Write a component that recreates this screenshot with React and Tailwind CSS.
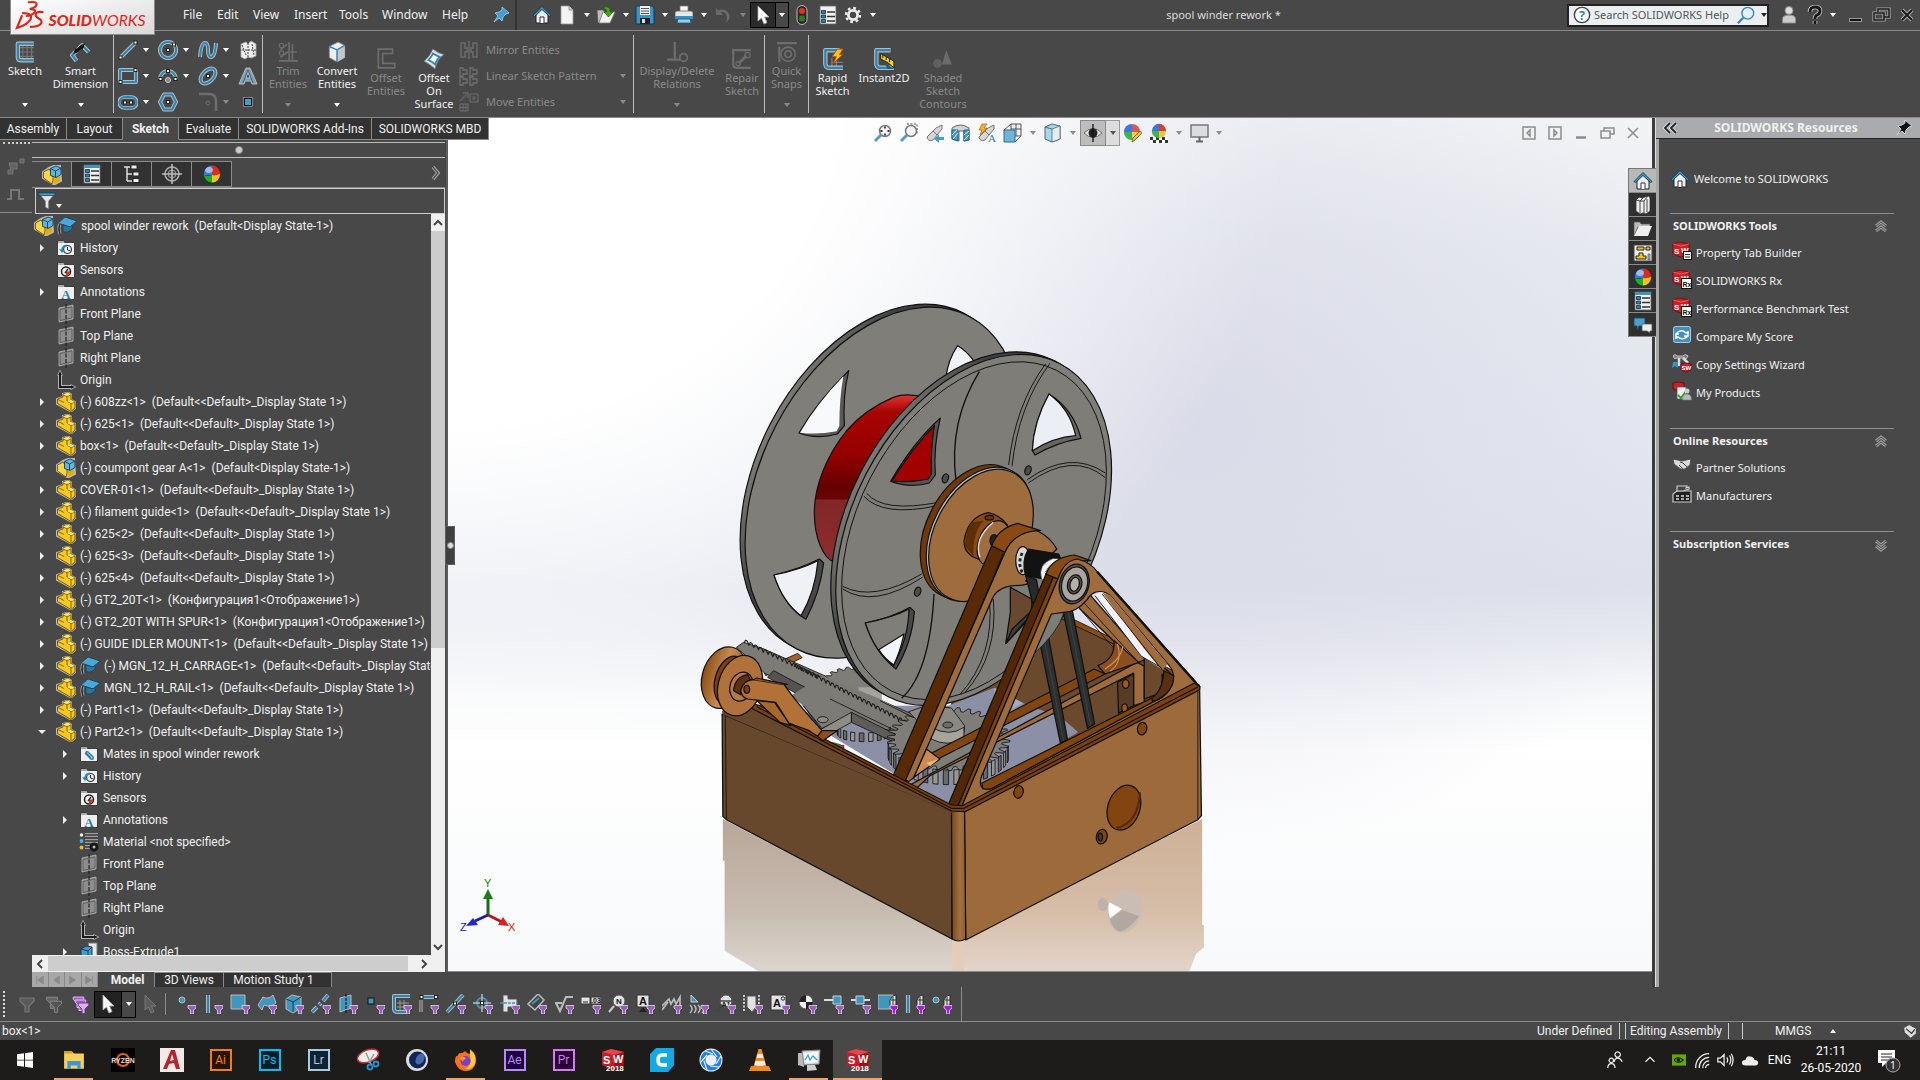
import React from "react";

/* ---------- icon primitives ---------- */
function Ico({ children, s = 20, box = 20, className = "" }) {
  return (
    <svg width={s} height={s} viewBox={`0 0 ${box} ${box}`} fill="none" aria-hidden="true" className={"shrink-0 " + className}>
      {children}
    </svg>
  );
}
const HALO = "#b9b9b9";
function Halo({ d, c = "#2b86b5", w = 2, h = 4, fill = "none" }) {
  return (
    <g fill={fill} strokeLinejoin="round">
      <path d={d} stroke={HALO} strokeWidth={h} />
      <path d={d} stroke={c} strokeWidth={w} />
    </g>
  );
}
function Node({ x, y, c = "#fff" }) {
  return <rect x={x - 1.5} y={y - 1.5} width="3" height="3" fill={c} stroke="#222" strokeWidth="1" />;
}
function Caret({ className = "text-white" }) {
  return (
    <svg width="6" height="4" viewBox="0 0 6 4" className={"shrink-0 " + className} aria-hidden="true">
      <path d="M0 0h6L3 4z" fill="currentColor" />
    </svg>
  );
}

const Home = () => (
  <Ico>
    <path d="M4 9v9h12V9l-6-5z" fill="#eee" stroke="#222" strokeWidth="1" />
    <path d="M1 10.500 10 1.500l9 9-1.500 1L10 4.500 2.500 11.500z" fill="#3e9ccc" stroke="#12384c" strokeWidth=".9" />
    <path d="M8 18v-6h4v6" stroke="#333" fill="#fff" />
  </Ico>
);
const Doc = () => (
  <Ico>
    <path d="M4 1h8l4 4v14H4z" fill="#f4f4f4" stroke="#999" strokeWidth=".8" />
    <path d="M12 1v4h4" fill="#ccc" stroke="#888" strokeWidth=".8" />
  </Ico>
);
const OpenDoc = () => (
  <Ico>
    <path d="M1 5h6l2 2v11H2z" fill="#bdbdbd" stroke="#555" strokeWidth=".7" />
    <path d="M3 18 7 7h12l-5 11z" fill="#f1f1f1" stroke="#777" strokeWidth=".8" />
    <path d="M8 2q7-1 6 5h3l-4.500 5L8 7h3q0-3-3-3z" fill="#45a717" stroke="#1f5c05" strokeWidth=".7" />
  </Ico>
);
const Save = () => (
  <Ico>
    <path d="M1 1h17l1 2v16H1z" fill="#3d94c0" stroke="#0f3a52" />
    <path d="M5 1h10v9H5z" fill="#f0f0f0" />
    <path d="M6 3.500h8M6 6h8M6 8.500h8" stroke="#555" />
    <path d="M5 13h10v6H5z" fill="#222" />
    <path d="M7 14h3v4H7z" fill="#ddd" />
  </Ico>
);
const Print = () => (
  <Ico>
    <path d="M6 1h8v6H6z" fill="#f5f5f5" stroke="#777" strokeWidth=".7" />
    <path d="M1 8q0-2 2-2h14q2 0 2 2v6H1z" fill="#e8e8e8" stroke="#555" strokeWidth=".7" />
    <path d="M1 11h18v3H1z" fill="#3390c4" />
    <path d="M4 14h12l1 4H3z" fill="#8fd0ee" stroke="#1c5776" strokeWidth=".8" />
  </Ico>
);
const Undo = () => (
  <Ico>
    <path d="M3 3v7h7L7.500 7.500Q14 5 14 15l-2 3q6-3 4-9-3-6-11-4z" fill="#6a6a6a" />
  </Ico>
);
const Cursor = ({ c = "#fff", s = "#aaa" }) => (
  <Ico>
    <path d="M5 1v15l3.500-3 2.500 6 3-1.500-2.500-5.500H16z" fill={c} stroke={s} strokeWidth=".9" />
  </Ico>
);
const Traffic = () => (
  <Ico>
    <rect x="5" y="0.500" width="10" height="19" rx="5" fill="#2a2a2a" stroke="#bbb" />
    <circle cx="10" cy="6" r="3" fill="#e5301f" />
    <circle cx="10" cy="13.500" r="3" fill="#2c7d22" />
  </Ico>
);
const PropList = ({ top = false }) => (
  <Ico>
    <rect x="2" y="1" width="16" height="18" fill="#f2f2f2" stroke="#666" strokeWidth=".8" />
    {top && <path d="M2 1h16v3H2z" fill="#3d94c0" />}
    <g fill="#2b86b5" stroke="#123" strokeWidth=".8">
      <path d="M3.500 5.500h4v3h-4zM3.500 10h4v3h-4zM3.500 14.500h4v3h-4z" />
    </g>
    <path d="M9 7h8M9 11.500h8M9 16h8" stroke="#333" strokeWidth="1.300" />
  </Ico>
);
const Gear = () => (
  <Ico>
    <circle cx="10" cy="10" r="4.600" stroke="#eee" strokeWidth="2.800" />
    <circle cx="10" cy="10" r="7" stroke="#eee" strokeWidth="2.400" strokeDasharray="2.700 2.798" />
  </Ico>
);
const Pin = ({ c = "#3f9fd6", s = "#9cc7df" }) => (
  <Ico>
    <path d="M11 2l7 6-3 1-3 3-1 4-3-3-5 4 4-6-3-3 4-1 3-2z" fill={c} stroke={s} strokeWidth=".9" />
  </Ico>
);

/* ---------- ribbon icons ---------- */
const D = "#6d6d6d";
const SketchI = () => (
  <Ico s={22}>
    <path d="M8 2v16M12 2v16M16 2v16M4 6h14M4 10h14M4 14h14" stroke="#777" />
    <Halo d="M18 2.500H3.500v12q0 3 3 3H18" />
  </Ico>
);
const SmartDim = () => (
  <Ico s={22}>
    <Halo d="M6 18 2 13l9-9 6 6" />
    <path d="m3 12 2-6 3 3zM14 2l-6 3 3 3z" fill="#111" />
    <path d="m5 10 7-6" stroke="#111" strokeWidth="3" />
  </Ico>
);
const Line = () => (
  <Ico>
    <Halo d="M2 18 17 3" />
    <Node x={2.500} y={17.500} />
    <Node x={17.500} y={2.500} />
  </Ico>
);
const Circle = () => (
  <Ico>
    <Halo d="M10 2a8 8 0 1 0 .1 0" />
    <Node x={10} y={10} />
    <Node x={16} y={4.500} />
  </Ico>
);
const Spline = () => (
  <Ico>
    <Halo d="M2 17Q3 3 7 3q3 0 3 7t3 7q4 0 5-14" />
  </Ico>
);
const PlaneI = () => (
  <Ico>
    <path d="M3 4 8 2l2 2 3-3 5 3v12l-5 2-3-1-3 2-4-2z" fill="#eee" stroke="#aaa" strokeWidth=".8" />
    <path d="M10 0v20M1 10h18M4 5l4 10M14 4l2 11" stroke="#444" strokeDasharray="2 1" />
  </Ico>
);
const RectI = () => (
  <Ico>
    <Halo d="M2 4h16v12H2z" />
    <Node x={2.500} y={16} />
    <Node x={17.500} y={4} />
  </Ico>
);
const ArcI = () => (
  <Ico>
    <Halo d="M2 13a8 8 0 0 1 16 0" />
    <Node x={2.500} y={13} />
    <Node x={17.500} y={13} />
    <Node x={10} y={5} />
    <circle cx="10" cy="14" r="2.500" fill="#888" stroke="#ccc" />
  </Ico>
);
const EllI = () => (
  <Ico>
    <g transform="rotate(-45 10 10)">
      <ellipse cx="10" cy="10" rx="9" ry="5.500" stroke={HALO} strokeWidth="4" />
      <ellipse cx="10" cy="10" rx="9" ry="5.500" stroke="#2b86b5" strokeWidth="2" />
    </g>
    <Node x={10} y={10} />
  </Ico>
);
const TextA = () => (
  <Ico>
    <path d="M1 18 8 2h4l7 16h-5l-1-3H7l-1 3zM8 12h4l-2-6z" fill="#7d9eb0" stroke="#bbb" fillRule="evenodd" />
    <path d="M5 17 10 4l5 13" stroke="#2b6f94" />
  </Ico>
);
const SlotI = () => (
  <Ico>
    <rect x="1" y="5" width="18" height="11" rx="5.500" stroke={HALO} strokeWidth="3.500" />
    <rect x="1.500" y="5" width="17" height="11" rx="5.500" stroke="#2b86b5" strokeWidth="2" />
    <Node x={7} y={10.500} />
    <Node x={13} y={10.500} />
  </Ico>
);
const PolyI = () => (
  <Ico>
    <Halo d="M6 2.500h8l4 7.500-4 7.500H6L2 10z" />
    <Node x={10} y={10} />
  </Ico>
);
const FilletI = () => (
  <Ico>
    <path d="M1 2h10q7 0 7 7v10" stroke={D} strokeWidth="2.500" />
    <circle cx="10" cy="11" r="2" stroke={D} />
  </Ico>
);
const PointI = () => (
  <Ico>
    <rect x="6.500" y="6.500" width="7" height="7" fill="#3f9fc8" stroke="#111" />
    <rect x="5.500" y="5.500" width="9" height="9" stroke="#aaa" strokeWidth=".6" />
  </Ico>
);
const TrimI = () => (
  <Ico s={22}>
    <path d="M11 1v17M14 3v14M2 18h17M12 10h6M3 8l6-5M3 15l8-6" stroke={D} strokeWidth="1.500" />
    <circle cx="4" cy="4" r="2" stroke={D} />
    <circle cx="4" cy="11" r="2" stroke={D} />
  </Ico>
);
const ConvertI = () => (
  <Ico s={22}>
    <path d="M3 5 11 1l6 3v11l-7 4-7-4z" fill="#eee" stroke="#888" strokeWidth=".8" />
    <path d="M10 8 17 4v11l-7 4z" fill="#c6c6c6" />
    <path d="M3 5l7 3 7-4M10 8v11" stroke="#2b86b5" strokeWidth="1.300" />
  </Ico>
);
const OffsetI = () => (
  <Ico s={22}>
    <path d="M16 1H3v17h15v-4H7V5h9z" stroke={D} strokeWidth="1.500" />
  </Ico>
);
const OffSurfI = () => (
  <Ico s={22}>
    <path d="M9 1q5 4 10 5-6 4-8 13Q5 14 1 12q5-4 8-11z" fill="#ddd" stroke="#777" strokeWidth=".7" />
    <path d="M9 5q3 2 6 3-3 3-4 7-3-3-6-4 3-3 4-6z" fill="#fff" stroke="#2b86b5" strokeWidth="1.600" />
  </Ico>
);
const MirrorI = () => (
  <Ico>
    <path d="M10 1v18M2 3v14h4V12H8V8H6V3zM18 3v14h-4V12h-2V8h2V3z" stroke={D} strokeWidth="1.400" />
  </Ico>
);
const LinearI = () => (
  <Ico>
    <path d="M1 2h3v2h4v4H4v2H1zM11 2h3v2h4v4h-4v2h-3zM1 11h3v2h4v4H4v2H1zM11 11h3v2h4v4h-4v2h-3z" stroke={D} strokeWidth="1.300" />
  </Ico>
);
const MoveI = () => (
  <Ico>
    <path d="M1 9 9 1M4 1h5v5" stroke="#5d5d5d" strokeWidth="2" />
    <path d="M11 2h8v8h-8zM14 5h2v2h-2zM1 12h8v7H1zM1 15.500h8M4 12v7M7 12v7" stroke={D} />
  </Ico>
);
const RelI = () => (
  <Ico s={22}>
    <path d="M8 1v15M1 17h12" stroke={D} strokeWidth="2" />
    <circle cx="16" cy="15" r="3.500" stroke={D} strokeWidth="1.500" />
  </Ico>
);
const RepairI = () => (
  <Ico s={22}>
    <path d="M18 2H2v13q0 3 3 3h13" stroke={D} strokeWidth="2" />
    <path d="M7 14l7-7" stroke={D} strokeWidth="2.500" />
    <circle cx="6.500" cy="14" r="2" stroke={D} />
    <circle cx="15" cy="6.500" r="2.500" stroke={D} />
  </Ico>
);
const SnapI = () => (
  <Ico s={22}>
    <path d="M1 2h18M3 5v14" stroke={D} strokeWidth="2" />
    <circle cx="11" cy="12" r="6.500" stroke={D} strokeWidth="1.500" />
    <circle cx="11" cy="12" r="3" stroke={D} strokeWidth="1.500" />
  </Ico>
);
const RapidI = () => (
  <Ico s={22}>
    <path d="M9 9v8M13 9v8M9 13h10" stroke="#888" />
    <Halo d="M16 2H3v12q0 4 4 4h12" />
    <path d="M14 1h5l-3 5h3l-9 8 3-6H9z" fill="#f5c518" stroke="#b5480e" strokeWidth=".9" />
  </Ico>
);
const InstantI = () => (
  <Ico s={22}>
    <Halo d="M16 2H3v12q0 4 4 4h12" />
    <path d="M7 5l12 7v6l-6-5-6-3z" fill="#f5d518" stroke="#222" strokeWidth=".9" />
    <path d="M9 6v3M12 8v3M15 10v3" stroke="#222" />
    <path d="m10 12 8 7h-5z" fill="#195d80" />
  </Ico>
);
const ShadedI = () => (
  <Ico s={22}>
    <circle cx="5" cy="14" r="4" fill="#606060" />
    <path d="m13 2 5 13H9z" fill="#6b6b6b" />
  </Ico>
);

/* ---------- tree icons ---------- */
const Part = () => (
  <Ico>
    <path d="M1 7 7 5V2l5-1.500 3 2V8l4 2v6l-4 3.500L1 12z" fill="#f2c21a" stroke={HALO} strokeWidth="2" />
    <path d="M1.500 7 7 5V2l5-1.500 3 2V8l4 2v6l-4 3.500-13.500-8z" fill="#f6c820" stroke="#5b4305" strokeWidth=".8" />
    <path d="M7 3l4 1.500 4-1.500M11 4.500V9l4 2.500 4-1.500M15 11.500v7M2 7.500l6 3" stroke="#7a5a08" strokeWidth=".9" />
    <path d="m7 2.500 4 1.500 4-1.500-3-2zM11 9l4 2 4-1-4-2z" fill="#ffe779" />
  </Ico>
);
const Asm = () => (
  <Ico>
    <path d="M1 7 7 3l5-2h6l1 15-7 3.500L1 13z" fill="#f2c21a" stroke={HALO} strokeWidth="2" />
    <path d="M1.500 7 7 4l4 6v5l-1 4-8.500-6z" fill="#f8d545" stroke="#5b4305" strokeWidth=".8" />
    <path d="M12 13l6-2v5l-6 3z" fill="#e0ac12" />
    <path d="M8.500 3.500 14 1l5 2v6.500l-5 3-5.500-2z" fill="#63b4dc" stroke="#123f57" strokeWidth=".9" />
    <path d="M8.500 3.500 13.500 6 19 3M13.500 6v6" stroke="#123f57" strokeWidth=".9" />
  </Ico>
);
const Hat = () => (
  <Ico>
    <path d="M1 7 8 1l12 4-7 6z" fill="#4aa8d8" stroke="#173f55" strokeWidth=".8" />
    <path d="M6 9v6q4 3 9-2V9l-2 2z" fill="#2a769f" stroke="#173f55" strokeWidth=".7" />
    <path d="M3 8q-2 4 0 10" stroke="#bbb" strokeWidth="3" />
    <path d="M3 8q-2 4 0 10" stroke="#222" strokeWidth="1.500" />
  </Ico>
);
const Folder = ({ children }) => (
  <Ico>
    <path d="M1.500 2.500h6l1 2h10v13h-17z" fill="#efefef" stroke="#333" strokeWidth=".9" />
    <path d="M2 3h5l1 2H2z" fill="#aaa" />
    {children}
  </Ico>
);
const History = () => (
  <Folder>
    <circle cx="11.500" cy="11.500" r="4" stroke="#333" strokeWidth="1.200" />
    <path d="M11.500 9v3l3 1" stroke="#333" />
    <path d="M11 7.500q-5 0-5 6" stroke="#2b86b5" strokeWidth="1.800" />
    <path d="m3 11 3 4 3-3z" fill="#2b86b5" />
  </Folder>
);
const Sensors = () => (
  <Folder>
    <circle cx="10" cy="11.500" r="4.500" stroke="#222" strokeWidth="1.500" />
    <path d="M10 12v4q4-1 4-5z" fill="#d8341c" />
    <path d="m9 13 3-4" stroke="#222" strokeWidth="1.300" />
  </Folder>
);
const Annot = () => (
  <Folder>
    <text x="10" y="16.500" textAnchor="middle" fontSize="13" fontWeight="700" fill="#2b7eaa" fontFamily="Liberation Serif, serif">A</text>
  </Folder>
);
const Mates = () => (
  <Folder>
    <path d="m6 9 6 6q3 1 2-2L9 8Q7 7 7 9l5 5" stroke="#2b7eaa" strokeWidth="1.500" />
  </Folder>
);
const Plane = () => (
  <Ico>
    <path d="M3 4 17 1v14L3 18z" fill="#8d8d8d" stroke="#b5b5b5" strokeWidth=".8" />
    <path d="M4 5.500 16 3v11L4 16.500z" stroke="#555" strokeWidth=".8" />
    <path d="M10 0v20" stroke="#222" strokeWidth="1.200" strokeDasharray="4 1.500" />
  </Ico>
);
const Origin = () => (
  <Ico>
    <path d="M4 3v14h13" stroke="#b5b5b5" strokeWidth="4" />
    <path d="m4-.5-3 6h6zM20.500 17l-6-3v6z" fill="#b5b5b5" />
    <path d="M4 3v14h13" stroke="#1c1c1c" strokeWidth="2" />
    <path d="m4 1-1.800 4h3.600zM19 17l-4-1.800v3.600z" fill="#1c1c1c" />
  </Ico>
);
const Material = () => (
  <Ico>
    <path d="M6 3h13M6 9h13M6 15h6" stroke="#bbb" strokeWidth="3.500" />
    <path d="M6 3h13M6 9h13M6 15h6" stroke="#333" strokeWidth="1.700" />
    <circle cx="2.500" cy="3" r="1.700" fill="#eee" />
    <circle cx="2.500" cy="9" r="1.900" fill="#49b5ee" />
    <circle cx="2.500" cy="15.500" r="1.900" fill="#f0c115" />
    <circle cx="15" cy="15" r="3" stroke="#181818" strokeWidth="3" fill="#bbb" />
  </Ico>
);
const Boss = () => (
  <Ico>
    <path d="M9 1h9v14l-5 3z" fill="#e8e8e8" stroke="#777" />
    <path d="M2 7 7 4l6 1v12l-4 2-7-3z" fill="#3f9fc8" stroke="#123f57" />
    <path d="m2 7 7 2 4-4M9 9v10" stroke="#123f57" />
  </Ico>
);
const Ball = () => (
  <Ico>
    <clipPath id="ball"><ellipse cx="10" cy="10" rx="8.500" ry="9" /></clipPath>
    <g clipPath="url(#ball)">
      <path d="M0 0h10v11H0z" fill="#3a78e0" />
      <path d="M10 0h10v11H10z" fill="#e02a1c" />
      <path d="M0 10q6 3 10 1v9H0z" fill="#1fae2c" />
      <path d="M10 11q5 1 10-2v11H10z" fill="#f3c51b" />
      <ellipse cx="7" cy="6" rx="4" ry="3" fill="#fff" opacity=".5" />
    </g>
    <ellipse cx="10" cy="10" rx="8.500" ry="9" stroke="#222" strokeWidth=".6" />
  </Ico>
);
const ConfigI = () => (
  <Ico>
    <path d="M2 3h6M5 3v14M5 10h5M5 17h5" stroke="#ddd" strokeWidth="1.500" />
    <path d="M9 1h6v4H9zM11 8h6v4h-6zM11 14.500h6v4h-6z" fill="#eee" stroke="#222" />
  </Ico>
);
const Target = () => (
  <Ico>
    <circle cx="10" cy="10" r="7" stroke="#aaa" strokeWidth="1.600" />
    <circle cx="10" cy="10" r="4" fill="#444" stroke="#999" />
    <path d="M10 0v20M0 10h20" stroke="#bbb" strokeWidth="1.600" />
  </Ico>
);

/* ---------- view toolbar icons ---------- */
const Glass = ({ dash }) => (
  <Ico>
    {dash && <path d="M8 1h10v11" stroke="#444" strokeDasharray="2 1.500" />}
    <circle cx="12" cy="8" r="5.500" fill="#f4f6f7" stroke="#777" strokeWidth="1.500" />
    <path d="m8 12-6 6" stroke="#5e9cbd" strokeWidth="3" />
    {!dash && <path d="M12 3.500v2M12 10.500v2M7.500 8h2M14.500 8h2" stroke="#333" strokeWidth="1.800" />}
  </Ico>
);
const Spy = ({ a }) => (
  <Ico>
    <path d="m2 14 9-9 6-3v4l-9 11q-5 2-6-3z" fill="#d6d6d6" stroke="#777" />
    <path d="m8 8 4 4" stroke="#777" />
    {a ? (
      <>
        <path d="M5 1h5L7 5h3l-7 7 2-5H2z" fill="#f5b52a" stroke="#b25a18" strokeWidth=".7" />
        <text x="11" y="19" fontSize="11" fill="#2b7eaa" fontFamily="Liberation Serif, serif">A</text>
      </>
    ) : (
      <path d="M19 14h-5v-3l-5 5 5 4v-3h5z" fill="#4b9cc4" />
    )}
  </Ico>
);
const Section = () => (
  <Ico>
    <path d="M1 5q8-6 17 0v12l-5 1V8H8v10l-7-2z" fill="#cfd6da" stroke="#666" />
    <path d="M1 7h6v11l-6-2zM13 7h5v10l-5 1z" fill="#4b9cc4" stroke="#256384" />
    <path d="m1 12 5-5M2 16l5-6M13 12l5-4M13 17l5-5" stroke="#cce8f5" />
  </Ico>
);
const ViewOr = () => (
  <Ico>
    <path d="M8 1h10v12H8zM13 1v12M8 6h10" stroke="#555" fill="#eee" />
    <path d="M1 7h11v12H1z" fill="#6fb5d6" stroke="#2d6f92" />
    <path d="m1 7 7-6M12 19l6-6" stroke="#555" />
  </Ico>
);
const Cube = () => (
  <Ico>
    <path d="M2 4 9 1l8 2v13l-8 3-7-3z" fill="#a8d6ea" stroke="#4a6d7d" />
    <path d="m9 6 8-3v13l-8 3z" fill="#e4eef2" stroke="#4a6d7d" strokeWidth=".8" />
    <path d="m2 4 7 2" stroke="#4a6d7d" />
  </Ico>
);
const Eye = () => (
  <Ico>
    <path d="M1 10q9-9 18 0-9 9-18 0z" fill="#e6e6e6" stroke="#666" />
    <circle cx="10" cy="10" r="4.500" fill="#222" />
    <path d="M10 1v18" stroke="#111" strokeWidth="1.300" />
  </Ico>
);
const BallPen = () => (
  <Ico>
    <g transform="scale(.9)"><path d="M10 1a9 9 0 0 0-9 9h9z" fill="#3a78e0" /><path d="M10 1a9 9 0 0 1 9 9h-9z" fill="#e0564c" /><path d="M1 10a9 9 0 0 0 9 9v-9z" fill="#3fb44a" /><path d="M19 10a9 9 0 0 1-9 9v-9z" fill="#e8d05b" /></g>
    <path d="m9 19 1-4 7-7 2 2-7 7z" fill="#e8c24a" stroke="#6a5520" strokeWidth=".8" />
  </Ico>
);
const Scene = () => (
  <Ico>
    <path d="M1 14h18v6H1z" fill="#fff" />
    <path d="M1 14h3v3H1zM7 14h3v3H7zM13 14h3v3h-3zM4 17h3v3H4zM10 17h3v3h-3zM16 17h3v3h-3z" fill="#333" />
    <g transform="translate(2 0) scale(.8)"><path d="M10 1a9 9 0 0 0-9 9h9z" fill="#3a78e0" /><path d="M10 1a9 9 0 0 1 9 9h-9z" fill="#e03a2c" /><path d="M1 10a9 9 0 0 0 9 9v-9z" fill="#3fb44a" /><path d="M19 10a9 9 0 0 1-9 9v-9z" fill="#e8c64b" /></g>
  </Ico>
);
const Monitor = () => (
  <Ico>
    <path d="M1 2h17v12H1z" fill="#d9dde0" stroke="#777" strokeWidth="1.500" />
    <path d="M9.500 14v4M6 18.500h7" stroke="#666" strokeWidth="2" />
  </Ico>
);

/* ---------- model drawing ---------- */
function gearPath(cx, cy, rx, ry, n, depth) {
  const p = [];
  for (let i = 0; i < n; i++) {
    [[0, 1 - depth], [0.25, 1], [0.5, 1], [0.75, 1 - depth]].forEach(([o, r]) => {
      const a = ((i + o) / n) * Math.PI * 2;
      p.push(`${(cx + Math.cos(a) * rx * r).toFixed(1)},${(cy + Math.sin(a) * ry * r).toFixed(1)}`);
    });
  }
  return p.join(" ");
}
function rackPath(x1, y1, x2, y2, n, h) {
  let d = `M${x1} ${y1}`;
  for (let i = 0; i < n; i++) {
    const f = (k) => [x1 + ((x2 - x1) * (i + k)) / n, y1 + ((y2 - y1) * (i + k)) / n];
    const [ax, ay] = f(0.25), [bx, by] = f(0.6), [ex, ey] = f(1);
    d += `L${ax.toFixed(1)} ${(ay - h).toFixed(1)}L${bx.toFixed(1)} ${(by - h).toFixed(1)}L${ex.toFixed(1)} ${ey.toFixed(1)}`;
  }
  return d;
}
function teeth(cx, cy, rx, ry, n, h, from, to) {
  const out = [];
  for (let i = 0; i < n; i++) {
    const a = ((from + ((to - from) * i) / n) * Math.PI) / 180;
    const b = ((from + ((to - from) * (i + 0.5)) / n) * Math.PI) / 180;
    const x1 = cx + Math.cos(a) * rx, y1 = cy + Math.sin(a) * ry, x2 = cx + Math.cos(b) * rx, y2 = cy + Math.sin(b) * ry;
    out.push(<path key={i} d={`M${x1} ${y1}L${x2} ${y2}V${y2 + h}L${x1} ${y1 + h}Z`} fill={i % 2 ? "#9a978d" : "#6c6a65"} />);
  }
  return out;
}
const FLANGE = { rx: 562, ry: 364 };

function Model() {
  return (
    <svg viewBox="448 118 1204 855" preserveAspectRatio="xMidYMid slice" className="block h-full w-full" role="img" aria-label="Spool winder assembly">
      <defs>
        <linearGradient id="red" x1="0" y1="0" x2="0" y2="1">
          <stop offset="0" stopColor="#e23434" /><stop offset=".1" stopColor="#a80404" /><stop offset=".35" stopColor="#960000" /><stop offset=".55" stopColor="#640000" /><stop offset=".62" stopColor="#6b0505" /><stop offset=".63" stopColor="#832628" /><stop offset="1" stopColor="#8c2e30" />
        </linearGradient>
        <linearGradient id="rim" x1="0" y1="0" x2="0" y2="1">
          <stop offset="0" stopColor="#7c7b78" /><stop offset=".25" stopColor="#3e3f40" /><stop offset=".6" stopColor="#37383a" /><stop offset=".8" stopColor="#6d6d6c" /><stop offset="1" stopColor="#6a6a68" />
        </linearGradient>
        <linearGradient id="post" x1="0" y1="0" x2="1" y2="0">
          <stop offset="0" stopColor="#74471f" /><stop offset=".6" stopColor="#a3703f" /><stop offset="1" stopColor="#8f5e31" />
        </linearGradient>
        <linearGradient id="refl" x1="0" y1="0" x2="0" y2="1">
          <stop offset="0" stopColor="#b9a798" /><stop offset=".6" stopColor="#c7bbb0" /><stop offset="1" stopColor="#ddd6d0" />
        </linearGradient>
        <linearGradient id="refr" x1="0" y1="0" x2="0" y2="1">
          <stop offset="0" stopColor="#cdb096" /><stop offset=".6" stopColor="#d6bda8" /><stop offset="1" stopColor="#e3d5ca" />
        </linearGradient>
        <linearGradient id="wheel" x1="0" y1="0" x2="1" y2="0">
          <stop offset="0" stopColor="#8f4e18" /><stop offset=".5" stopColor="#c98a52" /><stop offset="1" stopColor="#98561f" />
        </linearGradient>
      </defs>

      {/* floor reflection, box interior and gear train */}
      <g transform="translate(680 560) scale(.35714 .33333)" stroke="#111" strokeWidth="2.400" strokeLinejoin="round">
        <g stroke="none">
          <path d="M120 780 762 1140V1240H225L125 1175V905H120z" fill="url(#refl)" />
          <path d="M762 1140H797L1462 780V1098H1467V1165L1445 1185 1425 1240H762z" fill="url(#refr)" />
          <path d="M762 1140h33v100h-33z" fill="#e2cdbb" />
          <ellipse cx="1246" cy="1056" rx="46" ry="66" transform="rotate(12 1246 1056)" fill="#c9bdb4" />
          <path d="M1202 1030 1238 1050 1204 1078Q1196 1050 1202 1030z" fill="#fdfdfd" />
          <path d="M1204 1080 1238 1053 1286 1072Q1256 1112 1232 1118 1210 1110 1204 1080z" fill="#b3a89f" />
          <ellipse cx="1184" cy="1036" rx="14" ry="20" fill="#bcb3ac" />
        </g>
        <path d="M700 640 775 740 1440 390 1100 182 925 85 800 300z" fill="#6b492d" />
        <path d="M925 85 1100 180 1215 240 1455 378 1448 388 1205 250 1098 196 925 98z" fill="#8a4c18" />
        <path d="M330 470 460 420 600 440 750 440 880 386 960 432 1070 478 1115 520 840 690 750 732 600 645z" fill="#8c90a6" stroke="none" />
        <path d="M880 386 960 432 880 480z" fill="#a5a9bd" stroke="none" />

        {/* rack and sliding plate */}
        <path d="M232 330 330 283 342 296 240 350z" fill="#a06228" />
        <path d="M158 265 178 250 235 270 660 470 700 500 640 560 480 465 395 510 345 440 365 396 240 345z" fill="#7d7b76" />
        <path d="M245 355 262 335 368 395 340 412z" fill="#54534f" />
        <path d={rackPath(180, 252, 660, 500, 36, 10)} fill="none" stroke="#1a1a1a" strokeWidth="3" />
        <polygon points={gearPath(485, 372, 85, 48, 20, 0.14)} fill="#7f7d77" />
        <path d="M500 385h65v40q-30 20-65 0z" fill="#a5a39c" stroke="none" />
        <path d="M310 410 345 440 480 465 640 560 700 500 560 420 400 350z" fill="#7d7b76" stroke="none" />
        <path d="M345 440 396 506M420 420 690 560M560 425 700 500" fill="none" />
        <path d={rackPath(320, 324, 650, 505, 26, 10)} fill="none" stroke="#1a1a1a" strokeWidth="3" />
        <g>{teeth(515, 500, 75, 22, 9, 26, 180, 0)}</g>
        <path d="M396 510 480 460V490L398 538z" fill="#8f8c84" />
        <path d="M480 460 640 545V570L480 490z" fill="#5e5d5a" />
        <ellipse cx="400" cy="482" rx="15" ry="9" fill="#8e8c86" />
        <polygon points={gearPath(752, 540, 172, 95, 34, 0.12)} fill="#807e78" />
        <g>{teeth(752, 545, 170, 88, 17, 44, 175, 5)}</g>
        <ellipse cx="752" cy="540" rx="145" ry="76" fill="#7f7d78" stroke="none" />
        <path d="M640 458 690 440 760 447 797 500Q800 545 750 552 705 548 700 525z" fill="#8b8983" />
        <path d="M703 505v35q45 25 92 0v-35q-40 30-92 0z" fill="#a6a49d" />
        <ellipse cx="750" cy="498" rx="14" ry="9" fill="#6d6c68" />
        <path d="M425 548 450 556 462 575 430 560z" fill="#3f7c3c" stroke="none" />
        <path d="M448 558h12v14z" fill="#c02020" stroke="none" />
      </g>

      {/* spool */}
      <g transform="translate(700 280) scale(.33333)" stroke="#101010" strokeWidth="3.600" strokeLinejoin="round">
        <ellipse cx="534" cy="602" {...FLANGE} transform="rotate(-62.700 534 602)" fill="url(#rim)" />
        <ellipse cx="549" cy="611" {...FLANGE} transform="rotate(-62.700 549 611)" fill="#807e79" />
        <path d="M446 275Q350 370 297 462 350 482 412 465L433 440Q428 350 446 275z" fill="#5a5a58" />
        <path d="M430 292Q350 375 300 461 350 468 410 457L418 440Q418 360 430 292z" fill="#f8f9fb" stroke="none" />
        <path d="M222 888Q300 870 358 840L371 852Q360 940 318 1021 255 985 222 888z" fill="#474747" />
        <path d="M222 888Q300 872 354 845 345 940 303 1010 248 970 222 888z" fill="#eff1f6" />
        <path d="M773 200Q745 240 738 293L823 248Q800 215 773 200z" fill="#f1f2f7" />
        <path d="M680 356Q620 340 580 355C520 380 470 420 440 455 380 530 343 620 343 700 343 780 370 835 402 850L620 700 800 400z" fill="url(#red)" />

        <ellipse cx="806" cy="745" {...FLANGE} transform="rotate(-62.700 806 745)" fill="url(#rim)" />
        <ellipse cx="821" cy="753" {...FLANGE} transform="rotate(-62.700 821 753)" fill="#807e79" />
        <ellipse cx="822" cy="755" rx="541" ry="349" transform="rotate(-62.700 822 755)" fill="#7f7d78" strokeWidth="2.600" />
        <path d="M721 417Q640 490 572 607 630 628 688 612L706 588Q700 500 721 417z" fill="#555553" />
        <path d="M703 440Q635 510 576 606 630 612 685 600L694 585Q692 510 703 440z" fill="#a30000" />
        <path d="M1047 345Q1000 430 997 515L1005 528Q1070 490 1143 478 1120 390 1047 345z" fill="#66655f" />
        <path d="M1047 345Q1000 430 997 515 1060 475 1127 470 1110 390 1047 345z" fill="#eceef5" />
        <path d="M496 1032Q580 1015 630 985L643 997Q636 1090 588 1170 525 1120 496 1032z" fill="#474747" />
        <path d="M496 1032Q580 1015 627 990 625 1080 580 1160 525 1120 496 1032z" fill="#807e79" />
        <path d="M536 1112 612 1065Q600 1120 581 1158 555 1140 536 1112z" fill="#f4f5f9" />
        <g fill="none" strokeWidth="2.800">
          <path d="M838 278Q745 430 768 605" strokeWidth="4" />
          <path d="M1050 253Q955 380 936 562M1037 254Q945 380 926 558" />
          <path d="M492 652Q550 715 712 680M500 643Q550 702 716 670" />
          <path d="M985 612Q1120 515 1216 596M982 602Q1110 510 1216 582" />
          <path d="M428 930Q520 990 667 895M428 922Q520 970 665 885" />
          <path d="M702 945Q690 1180 605 1258" strokeWidth="4" />
          <path d="M868 960Q885 1130 780 1246M880 960Q895 1130 795 1240" />
        </g>
        <g fill="#4c4c4b">
          <ellipse cx="736" cy="598" rx="9" ry="14" transform="rotate(20 736 598)" />
          <ellipse cx="984" cy="574" rx="9" ry="14" transform="rotate(20 984 574)" />
          <ellipse cx="653" cy="938" rx="9" ry="14" transform="rotate(20 653 938)" />
        </g>

        {/* hub */}
        <ellipse cx="820" cy="758" rx="214" ry="141" transform="rotate(-62.700 820 758)" fill="#6f390c" />
        <ellipse cx="838" cy="766" rx="214" ry="141" transform="rotate(-62.700 838 766)" fill="#b9b9c4" />
        <ellipse cx="843" cy="769" rx="211" ry="139" transform="rotate(-62.700 843 769)" fill="#9f6c3e" />
        <path d="M865 701Q805 712 792 785 792 825 830 838L862 850 922 738Q900 708 865 701z" fill="#8a4a14" />
        <path d="M815 730Q798 750 795 800L820 832Q818 760 850 725z" fill="#5e2e06" stroke="none" />
        <ellipse cx="880" cy="792" rx="44" ry="70" transform="rotate(22 880 792)" fill="#a06d3e" />
        <path d="M840 835Q820 780 880 730" fill="none" stroke="#dfe0ea" strokeWidth="4" />
        <ellipse cx="868" cy="716" rx="13" ry="7" fill="#6a3608" />
        <ellipse cx="882" cy="785" rx="12" ry="18" fill="#222" />
      </g>

      {/* inner side frame, belt, outer side frame */}
      <g transform="translate(680 560) scale(.35714 .33333)" stroke="#111" strokeWidth="3.600" strokeLinejoin="round">
        <path d="M925 85 985 120V170L912 254 925 160z" fill="#68482f" />
        <path d="M912 254 985 165 990 150 930 210z" fill="#3b3b3b" />
        <path d="M1110 130 1150 110 1305 300 1280 312 1120 150z" fill="#9b693b" />
        <path d="M1120 150 1255 318M1130 130 1275 300" fill="none" strokeWidth="2.500" />
        <path d="M690 590 1160 330 1190 345 700 612z" fill="#83450f" />
        <path d="M640 680 1280 310 1300 322V430L1270 440V342L700 650 660 690z" fill="#9f6c3e" />
        <path d="M1225 370 1270 345V440L1228 462z" fill="#5a3c24" />
        <ellipse cx="1248" cy="375" rx="9" ry="13" fill="#a05a20" />
        <ellipse cx="1245" cy="447" rx="8" ry="12" fill="#a05a20" />
        <path d="M1170 320Q1220 300 1215 245L1285 310 1190 345z" fill="#8a4f20" />
        <path d="M1190 330Q1235 300 1240 262M1205 336Q1240 310 1225 255" fill="none" stroke="#d2945a" strokeWidth="3" />
        <path d="M1300 322V295L1360 330 1380 350 1350 400 1300 420z" fill="#6b492d" />
        <path d="M873-40 910-20 884 45 632 668 597 650z" fill="#582a06" />
        <path d="M890 25 905-15 645 650 632 668z" fill="#8a4c18" />
        <path d="M873-40Q890-92 945-107L1010-85Q940-80 910-20z" fill="#8a4812" />
        <path d="M910-20Q935-80 1000-85 1038-65 1055-30L968 65Q990 78 935 80 885 85 872 125L655 655 640 668 632 662z" fill="#9f6c3e" />
        <path d="M655 655 690 570 728 600z" fill="#c98a55" />
        <path d="M690 612 725 600 700 622z" fill="#f0b880" stroke="none" />

        {/* pulley */}
        <ellipse cx="960" cy="5" rx="20" ry="42" fill="#d8d8d8" />
        <path d="M975-30 1060-15Q1085 30 1030 62L968 50Q955 10 975-30z" fill="#121212" />
        <path d="M958 40q-14-30 2-62" fill="none" stroke="#222" strokeWidth="8" strokeDasharray="9 8" />
        <path d="M1012 60Q1000 15 1045-2L1075 0Q1025 15 1030 75z" fill="#f2f2f2" strokeWidth="2" />
        <path d="M1025 60q-6-34 30-50" fill="none" stroke="#555" strokeWidth="6" strokeDasharray="3 2" />
        <path d="M968 50 998 62 1006 110 988 135z" fill="#282a29" />
        <path d="M1000 210 1026 200 1085 542 1065 552z" fill="#2c2f2e" />
        <path d="M1073 158 1098 152 1161 495 1141 508z" fill="#2c2f2e" />
        <path d="M1014 207 1074 546M1086 155 1150 500" stroke="#4a4d4c" strokeWidth="2" />
        <path d="M985 290Q1060 220 1075 160L1040 160 1000 240z" fill="#7c7c78" strokeWidth="2" />

        <path d="M1025 45 1058 60 788 745 752 735z" fill="#532705" />
        <path d="M1045 55 1058 60 788 745 778 742z" fill="#7e4210" />
        <path d="M1025 45Q1042-5 1105-12L1150 5Q1080 0 1058 60z" fill="#8a4812" />
        <path
          fillRule="evenodd"
          fill="#9f6c3e"
          d="M1058 60Q1075 5 1112 0 1150 10 1168 38L1455 383 798 750 788 745zM1040 165 845 650Q830 695 870 690L1325 428Q1375 410 1382 350 1380 330 1362 310L1205 110Q1185 92 1162 100 1148 106 1140 122 1110 160 1075 160z"
        />
        <path d="M845 672 1320 418 1350 404 1350 345Q1358 400 1382 350 1375 410 1325 428L870 690 848 690z" fill="#83450f" />
        <path d="M1355 335Q1352 395 1320 418L1325 428Q1385 400 1382 350z" fill="#5b3010" />
        <path d="M1162 108 1182 100 1205 110 1362 312 1345 328 1290 290z" fill="#f2f3f8" stroke="none" />
        <path d="M1182 100 1205 110 1365 315 1350 335 1300 270z" fill="#9f6c3e" stroke="none" />
        <path d="M1182 105 1215 150 1352 335M1162 110 1292 292 1348 326" fill="none" strokeWidth="2.600" />
        <path d="M1168 38 1445 372" fill="none" strokeWidth="7" />
        <ellipse cx="1104" cy="75" rx="41" ry="60" transform="rotate(12 1104 75)" fill="#54534f" />
        <ellipse cx="1105" cy="75" rx="36" ry="52" transform="rotate(12 1105 75)" fill="#aaa59e" />
        <ellipse cx="1105" cy="76" rx="20" ry="29" transform="rotate(12 1105 76)" fill="#55524e" />
        <ellipse cx="1105" cy="76" rx="13" ry="21" transform="rotate(12 1105 76)" fill="#b5b0aa" />

        {/* box walls */}
        <path d="M118 465 762 758V1140L130 782 120 772z" fill="#68482d" />
        <path d="M796 758 1455 392 1460 770 1450 782 800 1143z" fill="#9c6a3b" />
        <path d="M760 755 797 758 800 1140Q780 1152 762 1140z" fill="url(#post)" />
        <path d="M205 435 225 440 760 742 790 744 1440 375 1456 383 1455 395 800 758 760 760 118 465 118 455z" fill="#68482d" stroke="none" />
        <path d="M205 435 225 440 760 738 790 740 1440 372 1456 383 1455 392 798 758 760 756 200 448z" fill="#7b400f" />
        <path d="M215 443 760 748 795 748 1450 384" fill="none" stroke="#1c0d02" />
        <path d="M127 470 130 782M1450 398V780" fill="none" strokeWidth="2.500" />
        <g fill="#83440f">
          <ellipse cx="948" cy="699" rx="13" ry="19" transform="rotate(10 948 699)" />
          <ellipse cx="1294" cy="509" rx="13" ry="19" transform="rotate(10 1294 509)" />
          <ellipse cx="1243" cy="746" rx="45" ry="69" transform="rotate(16 1243 746)" />
          <ellipse cx="1181" cy="833" rx="15" ry="22" transform="rotate(10 1181 833)" />
        </g>
        <path d="M1222 808Q1285 790 1288 700" fill="none" stroke="#55290a" strokeWidth="6" />
        <ellipse cx="1177" cy="834" rx="6" ry="12" fill="#3a3a3a" />

        {/* guide wheel and arm */}
        <path d="M215 425 265 430 310 500 280 490z" fill="#a8672c" />
        <ellipse cx="124" cy="356" rx="62" ry="94" transform="rotate(14 124 356)" fill="url(#wheel)" />
        <ellipse cx="140" cy="364" rx="42" ry="74" transform="rotate(14 140 364)" fill="#7a3f10" />
        <ellipse cx="168" cy="380" rx="61" ry="92" transform="rotate(14 168 380)" fill="#b0713a" />
        <ellipse cx="172" cy="383" rx="32" ry="44" transform="rotate(14 172 383)" fill="#b87a42" />
        <path d="M150 395q4-42 40-48l8 16q-26 6-28 44z" fill="#5e2f0a" />
        <path d="M170 395Q176 364 205 362L292 377Q325 430 398 515L385 532 362 515 305 492 268 430 190 420Q172 415 170 395z" fill="#b27237" />
        <path d="M205 362 215 357 300 376 292 377M398 515 440 515 400 545 385 532z" fill="#8f4f1a" />
        <ellipse cx="187" cy="391" rx="8" ry="12" fill="#7a3f10" />
      </g>

      {/* axis triad */}
      <g strokeWidth="3" fontFamily="Liberation Sans, sans-serif" fontSize="11">
        <path d="M488 916V898" stroke="#1a6b1a" />
        <path d="M488 890l-5 10h10z" fill="#1d7a1d" />
        <path d="M488 916l-13 6" stroke="#1c1cb0" />
        <path d="M466 927l7-8 5 7z" fill="#2424dd" />
        <path d="M488 916l14 7" stroke="#b01c1c" />
        <path d="M509 927l-11-1 5-8z" fill="#d82020" />
        <text x="484" y="888" fill="#168016">Y</text>
        <text x="460" y="932" fill="#1010e0">Z</text>
        <text x="508" y="932" fill="#e01010">X</text>
      </g>
    </svg>
  );
}

/* ---------- title bar ---------- */
const MENUS = [
  ["File", "w-[34px]"], ["Edit", "w-[36px]"], ["View", "w-[41px]"], ["Insert", "w-[45px]"],
  ["Tools", "w-[43px]"], ["Window", "w-[60px]"], ["Help", "w-[45px]"],
];
function IconBtn({ label, className = "", children }) {
  return (
    <button type="button" aria-label={label} className={"flex shrink-0 items-center justify-center " + className}>
      {children}
    </button>
  );
}
function TitleBar() {
  return (
    <header className="relative flex h-[31px] shrink-0 items-center border-b border-[#8a8a8a] font-['Noto_Sans','Open_Sans',sans-serif] text-[11px]">
      <div className="absolute left-[10px] top-0 z-10 h-[35px] w-[145px] border border-t-0 border-[#8a8a8a] bg-gradient-to-br from-white to-[#d9d9d9]">
        <svg viewBox="0 0 145 34" className="h-full w-full" aria-label="SOLIDWORKS" role="img">
          <g fill="none" stroke="#d9281e" strokeWidth="2.200" strokeLinecap="round">
            <path d="M18 2q8-1 8 2 0 3-7 5 7 0 5 3-2 3-8 4" />
            <path d="M12 13q10 0 8 6-3 6-14 9l5-12" />
            <path d="M32 12q-7-1-7 3 0 2 4 4 4 3 0 6-3 2-9 2" />
          </g>
          <text x="38" y="26" fontSize="16" fill="#d9281e" fontStyle="italic" fontFamily="Lato, sans-serif"><tspan fontWeight="900">SOLID</tspan>WORKS</text>
        </svg>
      </div>
      <nav className="ml-[183px] flex text-[12px]">
        {MENUS.map(([m, w]) => (
          <button type="button" key={m} className={"text-left " + w}>{m}</button>
        ))}
      </nav>
      <div className="flex h-full flex-1 items-center">
        <IconBtn label="Pin menu" className="w-[28px]"><Pin /></IconBtn>
        <div className="h-full w-[2px] bg-[#333]" />
        <IconBtn label="Home" className="ml-[11px] w-[27px]"><Home /></IconBtn>
        <IconBtn label="New" className="w-[24px]"><Doc /></IconBtn>
        <IconBtn label="New options" className="w-[15px]"><Caret /></IconBtn>
        <IconBtn label="Open" className="w-[24px]"><OpenDoc /></IconBtn>
        <IconBtn label="Open options" className="w-[15px]"><Caret /></IconBtn>
        <IconBtn label="Save" className="w-[24px]"><Save /></IconBtn>
        <IconBtn label="Save options" className="w-[15px]"><Caret /></IconBtn>
        <IconBtn label="Print" className="w-[24px]"><Print /></IconBtn>
        <IconBtn label="Print options" className="w-[15px]"><Caret /></IconBtn>
        <IconBtn label="Undo" className="w-[24px]"><Undo /></IconBtn>
        <IconBtn label="Undo options" className="w-[15px]"><Caret className="text-[#858585]" /></IconBtn>
        <IconBtn label="Select" className="h-[26px] w-[26px] border border-black bg-[#2b2b2b]"><Cursor /></IconBtn>
        <IconBtn label="Select options" className="h-[26px] w-[13px] border border-l-0 border-black"><Caret /></IconBtn>
        <IconBtn label="Rebuild" className="w-[26px]"><Traffic /></IconBtn>
        <IconBtn label="File properties" className="w-[26px]"><PropList /></IconBtn>
        <IconBtn label="Options" className="w-[24px]"><Gear /></IconBtn>
        <IconBtn label="Options menu" className="w-[15px]"><Caret /></IconBtn>
        <h1 className="flex-1 truncate text-center text-[#ddd]">spool winder rework *</h1>
      </div>
      <label className="mr-[4px] flex h-[23px] w-[202px] shrink-0 items-center border-2 border-[#222] bg-[#eceff2] pl-[4px]">
        <Ico s={18}>
          <circle cx="10" cy="10" r="8.500" fill="#fff" stroke="#444" strokeWidth="1.600" />
          <text x="10" y="15" textAnchor="middle" fontSize="14" fontWeight="700" fill="#2b86b5" fontFamily="Open Sans, sans-serif">?</text>
        </Ico>
        <input aria-label="Search help" placeholder="Search SOLIDWORKS Help" className="ml-[3px] w-[144px] min-w-0 bg-transparent placeholder-[#555] outline-none" />
        <Ico s={18}>
          <circle cx="12" cy="8" r="6.500" fill="#e3f1f8" stroke="#3f86ad" strokeWidth="1.500" />
          <path d="m7 13-6 6" stroke="#3f86ad" strokeWidth="2.500" />
        </Ico>
        <Caret className="ml-[6px] text-[#222]" />
      </label>
      <IconBtn label="Login" className="ml-[2px] w-[27px]">
        <Ico><circle cx="10" cy="5.500" r="4" fill="#ddd" stroke="#888" /><path d="M3.500 18v-4q0-4 6.500-4t6.500 4v4z" fill="#ccc" stroke="#888" /></Ico>
      </IconBtn>
      <IconBtn label="Help" className="w-[26px]">
        <Ico><path d="M5 7q0-5 5-5t5 4q0 3-3 4-2 1-2 4M10 16v3" stroke="#bbb" strokeWidth="4.600" /><path d="M5 7q0-5 5-5t5 4q0 3-3 4-2 1-2 4M10 16v3" stroke="#181818" strokeWidth="2.800" /></Ico>
      </IconBtn>
      <IconBtn label="Help options" className="w-[10px]"><Caret /></IconBtn>
      <IconBtn label="Minimize" className="ml-[3px] w-[27px]">
        <Ico><path d="M4 15h13" stroke="#999" strokeWidth="4" /><path d="M5 15h11" stroke="#111" strokeWidth="2" /></Ico>
      </IconBtn>
      <IconBtn label="Restore" className="w-[26px]">
        <Ico><path d="M7 7V4h11v8h-5M3 8h10v7H3z" stroke="#aaa" strokeWidth="3.200" /><path d="M7 7V4h11v8h-5M3 8h10v7H3z" stroke="#181818" strokeWidth="1.500" /></Ico>
      </IconBtn>
      <IconBtn label="Close" className="w-[26px]">
        <Ico><path d="m5 5 10 10M15 5 5 15" stroke="#aaa" strokeWidth="4" /><path d="m5 5 10 10M15 5 5 15" stroke="#181818" strokeWidth="2" /></Ico>
      </IconBtn>
    </header>
  );
}

/* ---------- ribbon ---------- */
function Big({ icon, lines, off, low, arrow, className }) {
  return (
    <button type="button" className={"flex h-full shrink-0 flex-col items-center leading-[13px] " + (low ? "pt-[17px] " : "pt-[10px] ") + (off ? "text-[#8a8a8a] " : "") + className}>
      {icon}
      <span className="flex flex-col items-center pt-px">
        {lines.map((l) => <span key={l} className="whitespace-nowrap">{l}</span>)}
      </span>
      {arrow && <span className="mb-[10px] mt-auto"><Caret className={off ? "text-[#8a8a8a]" : "text-white"} /></span>}
    </button>
  );
}
const Sep = () => <div className="h-[78px] w-px shrink-0 self-center bg-[#bdbdbd]" />;
const SKETCH_TOOLS = [
  ["Line", Line, true], ["Circle", Circle, true], ["Spline", Spline, true], ["Plane", PlaneI, false],
  ["Rectangle", RectI, true], ["Arc", ArcI, true], ["Ellipse", EllI, true], ["Text", TextA, false],
  ["Slot", SlotI, true], ["Polygon", PolyI, false], ["Fillet", FilletI, true], ["Point", PointI, false],
];
function Ribbon() {
  return (
    <section aria-label="Sketch commands" className="flex h-[87px] shrink-0 border-b border-[#8a8a8a] font-['Noto_Sans','Open_Sans',sans-serif] text-[11px]">
      <Big icon={<SketchI />} lines={["Sketch"]} arrow className="w-[50px]" />
      <Big icon={<SmartDim />} lines={["Smart", "Dimension"]} arrow className="w-[61px]" />
      <div className="w-[2px] shrink-0" />
      <Sep />
      <div className="grid shrink-0 grid-cols-[40px_40px_40px_28px] grid-rows-3 pb-[2px] pt-[6px]">
        {SKETCH_TOOLS.map(([n, C, a]) => (
          <div key={n} className="flex items-center pl-[4px]">
            <IconBtn label={n}><C /></IconBtn>
            {a && <IconBtn label={n + " options"} className="w-[16px]"><Caret className={n === "Fillet" ? "text-[#8a8a8a]" : "text-white"} /></IconBtn>}
          </div>
        ))}
      </div>
      <Sep />
      <Big icon={<TrimI />} lines={["Trim", "Entities"]} off arrow className="w-[50px]" />
      <Big icon={<ConvertI />} lines={["Convert", "Entities"]} arrow className="w-[48px]" />
      <Big icon={<OffsetI />} lines={["Offset", "Entities"]} off low className="w-[50px]" />
      <Big icon={<OffSurfI />} lines={["Offset", "On", "Surface"]} low className="w-[46px]" />
      <div className="grid w-[176px] shrink-0 grid-rows-3 pb-[2px] pl-[2px] pt-[6px] text-[#8a8a8a]">
        {[["Mirror Entities", MirrorI, 0], ["Linear Sketch Pattern", LinearI, 1], ["Move Entities", MoveI, 1]].map(([n, C, a]) => (
          <button type="button" key={n} className="flex items-center gap-[7px] pr-[7px] text-left">
            <C /><span className="flex-1 whitespace-nowrap">{n}</span>{a ? <Caret className="text-[#8a8a8a]" /> : null}
          </button>
        ))}
      </div>
      <Sep />
      <Big icon={<RelI />} lines={["Display/Delete", "Relations"]} off arrow className="w-[86px]" />
      <Big icon={<RepairI />} lines={["Repair", "Sketch"]} off low className="w-[44px]" />
      <Sep />
      <Big icon={<SnapI />} lines={["Quick", "Snaps"]} off arrow className="w-[43px]" />
      <Sep />
      <Big icon={<RapidI />} lines={["Rapid", "Sketch"]} low className="w-[47px]" />
      <Big icon={<InstantI />} lines={["Instant2D"]} low className="w-[56px]" />
      <Big icon={<ShadedI />} lines={["Shaded", "Sketch", "Contours"]} off low className="w-[62px]" />
    </section>
  );
}

/* ---------- left panel ---------- */
const TABS = [["Assembly", "w-[67px]"], ["Layout", "w-[56px]"], ["Sketch", "w-[56px]"], ["Evaluate", "w-[60px]"], ["SOLIDWORKS Add-Ins", "w-[133px]"], ["SOLIDWORKS MBD", "w-[117px]"]];
const DD = "  (Default<<Default>_Display State 1>)";
const TREE = [
  [0, "c", Part, "(-) 608zz<1>" + DD], [0, "c", Part, "(-) 625<1>" + DD], [0, "c", Part, "box<1>" + DD],
  [0, "c", Asm, "(-) coumpont gear A<1>  (Default<Display State-1>)"], [0, "c", Part, "COVER-01<1>" + DD],
  [0, "c", Part, "(-) filament guide<1>" + DD], [0, "c", Part, "(-) 625<2>" + DD], [0, "c", Part, "(-) 625<3>" + DD],
  [0, "c", Part, "(-) 625<4>" + DD], [0, "c", Part, "(-) GT2_20T<1>  (Конфигурация1<Отображение1>)"],
  [0, "c", Part, "(-) GT2_20T WITH SPUR<1>  (Конфигурация1<Отображение1>)"], [0, "c", Part, "(-) GUIDE IDLER MOUNT<1>" + DD],
  [0, "c", Part, "(-) MGN_12_H_CARRAGE<1>" + DD, true], [0, "c", Part, "MGN_12_H_RAIL<1>" + DD, true],
  [0, "c", Part, "(-) Part1<1>" + DD], [0, "o", Part, "(-) Part2<1>" + DD],
  [1, "c", Mates, "Mates in spool winder rework"], [1, "c", History, "History"], [1, "", Sensors, "Sensors"],
  [1, "c", Annot, "Annotations"], [1, "", Material, "Material <not specified>"], [1, "", Plane, "Front Plane"],
  [1, "", Plane, "Top Plane"], [1, "", Plane, "Right Plane"], [1, "", Origin, "Origin"], [1, "c", Boss, "Boss-Extrude1"],
];
const ROWS = [
  [0, "c", History, "History"], [0, "", Sensors, "Sensors"], [0, "c", Annot, "Annotations"],
  [0, "", Plane, "Front Plane"], [0, "", Plane, "Top Plane"], [0, "", Plane, "Right Plane"], [0, "", Origin, "Origin"],
  ...TREE,
];
function TreeRow({ row: [lvl, st, C, text, hat] }) {
  return (
    <li className={"flex h-[22px] items-center " + (lvl ? "pl-[25px]" : "pl-[2px]")}>
      <span className="flex w-[16px] shrink-0 justify-center">
        {st && (
          <button type="button" aria-label={(st === "o" ? "Collapse " : "Expand ") + text}>
            <Ico s={8} box={8}><path d={st === "o" ? "M0 2h8L4 6z" : "M2 0v8l4-4z"} fill="#eee" /></Ico>
          </button>
        )}
      </span>
      <a href="#item" className="ml-[6px] flex items-center gap-[4px] whitespace-pre">
        <C />{hat && <Hat />}<span>{text}</span>
      </a>
    </li>
  );
}
const Chevron = ({ d }) => <Ico s={10} box={10}><path d={d} stroke="#444" strokeWidth="2" /></Ico>;

function LeftPanel() {
  return (
    <aside className="relative flex w-[448px] shrink-0 flex-col border-r-2 border-[#5c5c5c]">
      <nav className="relative z-10 flex h-[22px] w-max shrink-0">
        {TABS.map(([t, w]) => (
          <button type="button" key={t} className={"shrink-0 whitespace-nowrap border-b border-r border-[#8a8a8a] " + w + (t === "Sketch" ? " border-b-[#484848] font-bold" : " bg-[#323232]")}>
            {t}
          </button>
        ))}
      </nav>
      <div className="flex min-h-0 flex-1">
        <div className="flex w-[32px] shrink-0 flex-col items-center pt-[2px]">
          <div className="w-[27px] border-t-2 border-dotted border-[#ccc]" />
          <IconBtn label="Insert component" className="mt-[13px]"><Ico><path d="M3 6h8v6H7v5H2v-4h3z M14 2h4v4h-4z" fill="#636363" stroke="#777" /></Ico></IconBtn>
          <IconBtn label="Mate" className="mt-[7px]"><Ico><path d="M1 15h4V6h8v9h5" stroke="#777" strokeWidth="2" /></Ico></IconBtn>
          <div className="mt-[8px] w-full border-t border-[#8a8a8a]" />
        </div>
        <div className="flex min-w-0 flex-1 flex-col pr-px pt-[2px]">
          <div className="flex h-[16px] shrink-0 items-center justify-center border-y border-[#bdbdbd]">
            <span className="h-[8px] w-[8px] rounded-full border border-[#888] bg-[#ccc]" />
          </div>
          <div className="mt-[4px] flex h-[26px] shrink-0 items-end border-b border-[#8a8a8a]">
            {[["Feature tree", Asm], ["Properties", PropList], ["Configurations", ConfigI], ["Dimensions", Target], ["Display", Ball]].map(([n, C], i) => (
              <IconBtn key={n} label={n} className={"h-[26px] w-[40px] border-r border-t border-[#8a8a8a] " + (i ? "border-b bg-[#323232]" : "bg-[#484848]")}>
                <C top />
              </IconBtn>
            ))}
            <IconBtn label="More tabs" className="mb-[7px] ml-auto mr-[2px]">
              <Ico s={14} box={14}><path d="m4 1 5 6-5 6" stroke="#aaa" strokeWidth="3.500" /><path d="m4 1 5 6-5 6" stroke="#484848" strokeWidth="1.200" /></Ico>
            </IconBtn>
          </div>
          <label className="ml-[3px] flex h-[26px] shrink-0 items-center border border-[#cfcfcf] pl-[2px]">
            <Ico s={18}>
              <path d="M1 2h18l-7 8v9l-4-2v-7z" fill="#e6e6e6" stroke="#555" strokeWidth=".8" />
              <path d="M1 1h18v3H1z" fill="#3e9ccc" stroke="#12384c" strokeWidth=".8" />
            </Ico>
            <Caret className="mt-[10px]" />
            <input aria-label="Filter tree" className="min-w-0 flex-1 bg-transparent px-2 outline-none" />
          </label>
          <div className="flex min-h-0 flex-1">
            <div className="min-h-0 min-w-0 flex-1 overflow-hidden pt-px">
              <a href="#root" className="flex h-[22px] items-center gap-[3px] whitespace-pre pl-[2px]">
                <Asm /><Hat /><span className="ml-[1px]">spool winder rework  (Default{"<"}Display State-1{">"})</span>
              </a>
              <ul>{ROWS.map((r, i) => <TreeRow key={i} row={r} />)}</ul>
            </div>
            <div className="flex w-[14px] shrink-0 flex-col items-center bg-[#f0f0f0]">
              <div className="flex h-[17px] items-center"><Chevron d="M1 7l4-4 4 4" /></div>
              <div className="w-full flex-[144] bg-[#cdcdcd]" />
              <div className="flex-[100]" />
              <div className="flex h-[17px] items-center"><Chevron d="M1 3l4 4 4-4" /></div>
            </div>
          </div>
          <div className="flex h-[17px] shrink-0 items-center bg-[#f0f0f0] pb-px pt-px">
            <div className="flex w-[16px] justify-center"><Chevron d="M7 1 3 5l4 4" /></div>
            <div className="h-full flex-1 bg-[#cdcdcd]" />
            <div className="flex w-[37px] items-center justify-center pr-[6px]"><Chevron d="M3 1l4 4-4 4" /></div>
          </div>
        </div>
      </div>
      <div className="absolute -right-[9px] top-[408px] z-10 flex h-[39px] w-[10px] items-center justify-center border border-[#5c5c5c] bg-[#404040]">
        <span className="h-[7px] w-[7px] rounded-full border border-[#888] bg-[#ddd]" />
      </div>
    </aside>
  );
}

/* ---------- viewport ---------- */
const WinIco = ({ d }) => <Ico s={16} box={16}><path d={d} stroke="#8d8d8d" strokeWidth="1.500" /></Ico>;
function Viewport() {
  const g = "text-[#8d8d8d]";
  return (
    <main className="relative min-w-0 flex-1 overflow-hidden border-b border-[#8a8a8a] bg-[radial-gradient(ellipse_70%_80%_at_0%_0%,#ffffff_45%,#ffffff00_100%),radial-gradient(ellipse_45%_50%_at_62%_36%,#dadbe8_0%,#dadbe800_100%),linear-gradient(180deg,#f2f3f5_0%,#e9ebf1_15%,#e4e8f1_38%,#dee1eb_55%,#e8eaf1_61%,#f8f9fb_68%,#ffffff_74%,#f8f9fb_100%)]">
      <Model />
      <div className="absolute left-[422px] top-[2px] flex h-[26px] items-center">
        <IconBtn label="Zoom to fit" className="w-[26px]"><Glass /></IconBtn>
        <IconBtn label="Zoom to area" className="w-[26px]"><Glass dash /></IconBtn>
        <IconBtn label="Previous view" className="w-[26px]"><Spy /></IconBtn>
        <IconBtn label="Section view" className="w-[26px]"><Section /></IconBtn>
        <IconBtn label="Dynamic annotation" className="w-[26px]"><Spy a /></IconBtn>
        <IconBtn label="View orientation" className="w-[26px]"><ViewOr /></IconBtn>
        <IconBtn label="Orientation options" className="w-[14px]"><Caret className={g} /></IconBtn>
        <IconBtn label="Display style" className="w-[26px]"><Cube /></IconBtn>
        <IconBtn label="Display style options" className="w-[14px]"><Caret className={g} /></IconBtn>
        <IconBtn label="Hide/show items" className="h-[26px] w-[26px] border border-[#888] bg-[#bdbdbd]"><Eye /></IconBtn>
        <IconBtn label="Hide/show options" className="h-[26px] w-[14px] border border-l-0 border-[#999] bg-[#ddd]"><Caret className="text-[#555]" /></IconBtn>
        <IconBtn label="Edit appearance" className="w-[26px]"><BallPen /></IconBtn>
        <IconBtn label="Apply scene" className="w-[26px]"><Scene /></IconBtn>
        <IconBtn label="Scene options" className="w-[14px]"><Caret className={g} /></IconBtn>
        <IconBtn label="View settings" className="w-[28px]"><Monitor /></IconBtn>
        <IconBtn label="View setting options" className="w-[10px]"><Caret className={g} /></IconBtn>
      </div>
      <div className="absolute right-[11px] top-[7px] flex gap-[10px]">
        <IconBtn label="Collapse left"><WinIco d="M2 2h12v12H2zM6 2v1M9 5 6 8l3 3z" /></IconBtn>
        <IconBtn label="Collapse right"><WinIco d="M2 2h12v12H2zM7 5l3 3-3 3z" /></IconBtn>
        <IconBtn label="Minimize document"><Ico s={16} box={16}><path d="M3 12.500h10" stroke="#8d8d8d" strokeWidth="2.500" /></Ico></IconBtn>
        <IconBtn label="Restore document"><WinIco d="M5 6V3h10v6h-4M2 6h9v7H2z" /></IconBtn>
        <IconBtn label="Close document"><WinIco d="m3 3 10 10M13 3 3 13" /></IconBtn>
      </div>
    </main>
  );
}

/* ---------- task pane ---------- */
const Sw = ({ children }) => (
  <Ico>
    <path d="M1 3 8 1l9 2v10l-8 3-8-3z" fill="#cc1f26" stroke="#700" strokeWidth=".7" />
    <path d="m1 3 8 2 8-2" stroke="#f77" strokeWidth=".7" />
    <text x="2" y="13" fontSize="8" fontWeight="700" fill="#fff" fontFamily="Liberation Sans, sans-serif">S</text>
    <text x="9" y="12" fontSize="8" fontWeight="700" fill="#fff" fontFamily="Liberation Sans, sans-serif">W</text>
    {children}
  </Ico>
);
const Rx = () => (
  <Sw>
    <rect x="9.500" y="9.500" width="10" height="10" fill="#fff" stroke="#111" />
    <text x="10.500" y="18" fontSize="7" fontWeight="700" fill="#111" fontFamily="Liberation Sans, sans-serif">Rx</text>
  </Sw>
);
const PTab = () => <Sw><rect x="11.500" y="10.500" width="8" height="8" fill="#eee" stroke="#111" /><path d="M13 13.500h5M13 16h5" stroke="#333" /></Sw>;
const Score = () => (
  <Ico>
    <rect x="1.500" y="1.500" width="17" height="16" rx="2" fill="#4590ba" stroke="#a5cde0" />
    <path d="M4 9q5-6 10-1l2-1v4h-4M16 11q-5 5-10 1l-2 1V9h3" stroke="#fff" strokeWidth="1.500" />
  </Ico>
);
const CopyW = () => (
  <Ico>
    <path d="M1 3q2-3 4 0h6q2-3 5 0-1 4-4 2H5q-3 2-4-2z" fill="#777" stroke="#ddd" strokeWidth=".8" />
    <path d="M7 5v8M11 5l5 5" stroke="#ddd" strokeWidth="2.500" />
    <path d="M1 9h5v6l-3-2-3 2z" fill="#3d94c0" />
    <path d="M9 11l5-1 5 1v6l-5 2-5-2z" fill="#cc1f26" stroke="#600" strokeWidth=".7" />
    <text x="9.500" y="17" fontSize="6" fontWeight="700" fill="#fff" fontFamily="Liberation Sans, sans-serif">SW</text>
  </Ico>
);
const MyProd = () => (
  <Ico>
    <path d="M1 2 6 1l6 1v6L6 10 1 8z" fill="#cc1f26" stroke="#600" strokeWidth=".7" />
    <path d="M5 6h9v12H5z" fill="#eee" stroke="#555" strokeWidth=".8" />
    <path d="m6 14 3 3 5-7" stroke="#2f9e2a" strokeWidth="1.800" />
    <circle cx="15" cy="10" r="2.500" fill="#ccc" />
    <path d="M10.500 19q0-6 4.500-6t4.500 6z" fill="#bbb" stroke="#777" strokeWidth=".6" />
  </Ico>
);
const Shake = () => (
  <Ico>
    <path d="M1 3l5 1 4 1 4-1 5-1-1 6-5 4q-4 1-6-1L2 8z" fill="#d8d8d8" stroke="#444" strokeWidth=".9" />
    <path d="m8 6 3 1 4 4M7 9l4 4" stroke="#444" />
  </Ico>
);
const Factory = () => (
  <Ico>
    <path d="M1 18v-8l4-3h14v11z" fill="#222" stroke="#ccc" strokeWidth="1.200" />
    <path d="M5 7V2h10l-1 2 3-1v2l-6 2z" fill="#444" stroke="#ccc" strokeWidth="1.200" />
    <path d="M4 12h3M9 12h3M14 12h3M4 15h3M9 15h3M14 15h3" stroke="#ddd" strokeWidth="1.600" />
  </Ico>
);
const Books = () => (
  <Ico>
    <path d="M3 5l3-3 3 1 3-1 4-1 1 2v13l-4 3-3-1-3 1-4-3z" fill="#eee" stroke="#333" strokeWidth=".8" />
    <path d="M7 6v12M11 6v12M14 4v13M3 5l4 1 3-3M7 6l4 0 3-4" stroke="#333" strokeWidth=".9" />
  </Ico>
);
const Fold = () => <Ico><path d="M1 3h6l1 2h9v3H5L1 17z" fill="#bbb" stroke="#555" strokeWidth=".7" /><path d="M1 17 6 7h13l-4 10z" fill="#eee" /></Ico>;
const Palette = () => (
  <Ico>
    <path d="M1 2h18v16H1z" fill="#efefef" stroke="#444" />
    <path d="M4 4h7v3H4zM13 4h4v3h-4zM6 10h4v3h3v3H3v-3h3z" fill="#f3c51b" stroke="#222" />
    <path d="M15 11h2v6h-2z" fill="#aaa" stroke="#555" strokeWidth=".7" />
  </Ico>
);
const Forum = () => <Ico><path d="M1 3h11v8H6l-2 4v-4H1z" fill="#4aa0c8" stroke="#174a63" strokeWidth=".8" /><path d="M9 9h10v7h-2v2l-3-2H9z" fill="#eee" stroke="#555" strokeWidth=".8" /></Ico>;
const DblChev = ({ down }) => (
  <Ico s={14} box={14}>
    <g transform={down ? "rotate(180 7 7)" : undefined}>
      <path d="m2 6 5-4 5 4M2 11l5-4 5 4" stroke="#999" strokeWidth="3" /><path d="m2 6 5-4 5 4M2 11l5-4 5 4" stroke="#555" strokeWidth="1" />
    </g>
  </Ico>
);
function Group({ title, items, down, className = "" }) {
  return (
    <section className={"border-t border-[#8f8f8f] " + className}>
      <h3 className="flex h-[25px] items-center justify-between pl-[3px] pr-[6px] font-bold">
        {title}
        <IconBtn label={"Toggle " + title}><DblChev down={down} /></IconBtn>
      </h3>
      {items && (
        <ul>
          {items.map(([n, C]) => (
            <li key={n} className="flex h-[28px] items-center">
              <a href="#tool" className="ml-[2px] flex items-center gap-[4px] whitespace-nowrap"><span className="mb-[4px]"><C /></span>{n}</a>
            </li>
          ))}
        </ul>
      )}
    </section>
  );
}
function TaskPane() {
  return (
    <aside className="relative flex w-[268px] shrink-0 font-['Noto_Sans','Open_Sans',sans-serif] text-[11px]">
      <div className="absolute -left-[24px] top-[50px] z-10 flex w-[28px] flex-col border-l border-t border-[#777]">
        {[["Resources", Home], ["Design library", Books], ["File explorer", Fold], ["View palette", Palette], ["Appearances", Ball], ["Custom properties", PropList], ["Forum", Forum]].map(([n, C], i) => (
          <IconBtn key={n} label={n} className={"h-[24px] border-b border-[#8a8a8a] " + (i ? "bg-[#303030]" : "bg-[#b8b8b8]")}><C top /></IconBtn>
        ))}
      </div>
      <div className="w-[3px] bg-[#3c3c3c]" />
      <div className="w-px bg-[#e0e0e0]" />
      <div className="w-[3px] bg-[#a8a8a8]" />
      <div className="flex-1">
        <h2 className="-ml-[3px] flex h-[21px] items-center border-b border-[#222] bg-[#a9abae] px-[6px] font-bold">
          <IconBtn label="Collapse pane"><Ico s={16} box={16}><path d="M8 3 3 8l5 5M14 3 9 8l5 5" stroke="#ddd" strokeWidth="3.500" /><path d="M8 3 3 8l5 5M14 3 9 8l5 5" stroke="#222" strokeWidth="1.800" /></Ico></IconBtn>
          <span className="flex-1 text-center text-[12px]">SOLIDWORKS Resources</span>
          <IconBtn label="Pin pane"><Pin c="#111" s="#ddd" /></IconBtn>
        </h2>
        <div className="px-[11px] pr-[26px] pt-[25px]">
          <a href="#welcome" className="mb-[19px] flex h-[30px] items-center gap-[4px] whitespace-nowrap"><Home />Welcome to SOLIDWORKS</a>
          <Group title="SOLIDWORKS Tools" items={[["Property Tab Builder", PTab], ["SOLIDWORKS Rx", Rx], ["Performance Benchmark Test", Rx], ["Compare My Score", Score], ["Copy Settings Wizard", CopyW], ["My Products", MyProd]]} />
          <Group className="mt-[21px]" title="Online Resources" items={[["Partner Solutions", Shake], ["Manufacturers", Factory]]} />
          <Group className="mt-[21px]" title="Subscription Services" down />
        </div>
      </div>
    </aside>
  );
}

/* ---------- bottom bars ---------- */
function ModelTabs() {
  return (
    <div className="flex h-[15px] shrink-0 items-stretch pl-[32px] leading-[14px]">
      <div className="flex w-[66px] bg-[#a8a8a8] text-[#8a8a8a]">
        {["M12 2v8L6 6zM5 2v8", "M11 2v8L5 6z", "M5 2v8l6-4z", "M4 2v8l6-4zM11 2v8"].map((d, i) => (
          <IconBtn key={i} label={["First tab", "Previous tab", "Next tab", "Last tab"][i]} className="flex-1 border-r border-[#888]">
            <svg width="15" height="12" viewBox="0 0 16 12" aria-hidden="true"><path d={d} fill="#8a8a8a" stroke="#8a8a8a" /></svg>
          </IconBtn>
        ))}
      </div>
      <button type="button" className="w-[57px] border-r border-[#8a8a8a] pl-[3px] font-bold">Model</button>
      <button type="button" className="w-[69px] border-r border-t border-[#8a8a8a] bg-[#323232]">3D Views</button>
      <button type="button" className="w-[108px] border-r border-t border-[#8a8a8a] bg-[#323232] pr-[8px]">Motion Study 1</button>
    </div>
  );
}
const Funnel = ({ c, s }) => <path d="M3 4h14v3l-5 5v6H8v-6L3 7z" fill={c} stroke={s} strokeWidth="1.200" />;
const T = ({ children, x = 8, y = 11, s = 11 }) => <text x={x} y={y} fontSize={s} fontWeight="700" textAnchor="middle" fill="#111" fontFamily="Liberation Sans, sans-serif">{children}</text>;
const B = "#3f97c0";
const SILVER = "#e2e2e2";
const WingNut = () => <path d="M12 12V6q2-5 6-5v10zM13 6h5M15 3v8" fill="#ddd" stroke="#222" strokeWidth=".9" />;
const FILTERS = [
  ["Vertices", <circle cx="6" cy="6" r="3" fill={B} stroke={HALO} />],
  ["Edges", <Halo d="M5 1v18" />],
  ["Faces", <path d="M1 1h14v14H1z" fill={B} stroke={HALO} />],
  ["Surface bodies", <path d="M1 11 6 3q5 3 10-2l3 8q-6 5-12 2l-2 5z" fill={B} stroke={HALO} />],
  ["Solid bodies", <><path d="M2 5 8 1l9 2v11l-8 5-7-4z" fill={B} stroke={HALO} /><path d="m2 5 7 3 8-5M9 8v10" stroke="#123f57" /></>],
  ["Axes", <><Halo d="m1 18 5-5M8 11l2-2M12 7l5-6" /></>],
  ["Planes", <><path d="M2 4 13 1v13L2 18z" fill={B} stroke={HALO} /><path d="M8 0v19" stroke="#111" strokeDasharray="3 1" /></>],
  ["Sketch points", <rect x="3" y="4" width="6" height="6" fill={B} stroke="#111" />],
  ["Sketches", <><path d="M8 6v12M12 6v12M5 9h12M5 13h12" stroke="#999" /><Halo d="M18 2H2v13q0 3 4 3h10" /></>],
  ["Sketch segments", <><Halo d="M3 3h14" /><path d="M2 6v12" stroke="#ccc" strokeWidth="3" /><path d="M2 6v12" stroke="#222" /><Node x={2.500} y={3} /><Node x={17} y={3} /></>],
  ["Midpoints", <><Halo d="M1 18 17 1" /><Node x={9} y={9.500} /></>],
  ["Center marks", <><circle cx="9" cy="9" r="5" stroke={B} strokeWidth="2" /><path d="M9 0v18M0 9h18" stroke={HALO} strokeWidth="1.500" /><Node x={9} y={9} /></>],
  ["Centerlines", <><path d="M3 1h5v4h9v8H8v5H3z" fill={SILVER} stroke="#555" /><path d="M0 9h18" stroke={B} strokeDasharray="3 1" strokeWidth="1.500" /></>],
  ["Dimensions", <><path d="M1 10 11 0l6 6L8 16z" fill="#444" stroke={HALO} strokeWidth="1.500" /><path d="m5 10 7-6" stroke={B} strokeWidth="2" /></>],
  ["Surface finish", <path d="M1 9h7M2 9l4 8 6-14h7" stroke="#bbb" strokeWidth="2" />],
  ["Geometric tolerances", <><path d="M0 3h9v7H0zM10 3h10v7H10z" fill={SILVER} stroke="#333" /><path d="M2 8h5" stroke="#222" /><T x={15} y={9} s={7}>.03</T></>],
  ["Notes", <><circle cx="11" cy="7" r="6" fill={SILVER} stroke="#555" /><path d="m6 12-5 6" stroke="#ccc" strokeWidth="2" /><T x={11} y={10} s={8}>N</T></>],
  ["Datums", <><path d="M2 1h12v12H2z" fill={SILVER} stroke="#333" /><T x={8} y={11}>A</T><path d="m8 13-4 5h8z" fill="#222" /></>],
  ["Weld symbols", <path d="M0 12 7 5l2 5 3-5 2 5 4-7v8M0 16 6 8" stroke="#bbb" strokeWidth="1.700" />],
  ["Weld beads", <><path d="M2 1v7h7z" fill={B} stroke="#ccc" /><path d="M1 11q4 4 0 8M5 11q4 4 0 8M9 11q4 4 0 8M13 11q4 4 0 8" stroke="#bbb" strokeWidth="1.500" /></>],
  ["Datum targets", <><circle cx="10" cy="7" r="6" fill={SILVER} stroke="#555" /><path d="M4 7h12M5 12l-4 6" stroke="#444" strokeWidth="1.500" /><T x={10} y={13} s={7}>A1</T></>],
  ["Cosmetic threads", <><path d="M4 2h9v11l-4 5-5-5z" fill={SILVER} stroke="#555" /><path d="M1 1v16M16 1v12" stroke="#ccc" strokeDasharray="2 1.500" strokeWidth="2" /></>],
  ["Blocks", <><path d="M1 1h15v15H1z" fill={SILVER} stroke="#333" /><T x={7} y={13}>A</T><circle cx="13" cy="4.500" r="1.700" stroke="#222" /></>],
  ["Dowel pins", <><circle cx="9" cy="8" r="7" fill="#eee" stroke="#555" /><path d="M9 1v7H2a7 7 0 0 1 7-7M9 15V8h7a7 7 0 0 1-7 7" fill="#222" /></>],
  ["Connection points", <><path d="M0 6h9" stroke="#ddd" strokeWidth="2" /><path d="M9 2h8v8H9z" fill={B} stroke="#ccc" /></>],
  ["Routing points", <><path d="M0 6h19" stroke="#ddd" strokeWidth="2" /><path d="M5 2h8v8H5z" fill={B} stroke="#ccc" /></>],
  ["Mesh faces", <><path d="M0 1h15v14H0z" fill={B} stroke={HALO} /><WingNut /></>],
  ["Mesh edges", <><Halo d="M3 1v18" /><WingNut /></>],
  ["Mesh vertices", <><circle cx="4" cy="6" r="3" fill={B} stroke={HALO} /><WingNut /></>],
];
function FilterBar() {
  return (
    <section aria-label="Selection filters" className="flex h-[35px] shrink-0 items-center border-b border-[#8a8a8a]">
      <div className="ml-[3px] h-[26px] border-l-2 border-dotted border-[#ddd]" />
      <IconBtn label="Toggle filter bar" className="ml-[8px] w-[27px]"><Ico><Funnel c="#5a5a5a" s="#777" /></Ico></IconBtn>
      <IconBtn label="Clear filters" className="w-[27px]"><Ico><g transform="scale(.8)"><Funnel c="#666" s="#888" /></g><g transform="translate(4 4) scale(.8)"><Funnel c="#555" s="#888" /></g></Ico></IconBtn>
      <IconBtn label="Select all filters" className="w-[27px]"><Ico><g transform="scale(.75)"><Funnel c="#a65fc7" s="#e4c6f5" /></g><g transform="translate(2 3) scale(.75)"><Funnel c="#a65fc7" s="#e4c6f5" /></g><g transform="translate(5 6) scale(.75)"><Funnel c="#d8b3ec" s="#6b2f88" /></g></Ico></IconBtn>
      <IconBtn label="Select" className="h-[27px] w-[28px] border border-black bg-[#222]"><Cursor /></IconBtn>
      <IconBtn label="Select options" className="h-[27px] w-[14px] border border-l-0 border-black"><Caret /></IconBtn>
      <IconBtn label="Magnified selection" className="w-[27px]"><Cursor c="#5c5c5c" s="#7c7c7c" /></IconBtn>
      <div className="ml-[2px] h-[22px] border-l border-[#8a8a8a]" />
      <div className="ml-[6px] flex">
        {FILTERS.map(([n, g], i) => (
          <IconBtn key={n} label={"Filter " + n} className="w-[27px]">
            <Ico>
              {g}
              <path d="M12 11.500h8V14l-2.500 2v4h-3v-4L12 14z" fill={i > 25 ? "#b312e8" : "#9a5cc0"} stroke="#ddd" strokeWidth=".8" />
            </Ico>
          </IconBtn>
        ))}
      </div>
      <div className="ml-[6px] h-full border-l border-[#8a8a8a]" />
    </section>
  );
}
function StatusBar() {
  return (
    <footer className="flex h-[18px] shrink-0 items-center pl-[2px] leading-[18px]">
      <span className="flex-1">box{"<1>"}</span>
      <span className="w-[82px] whitespace-nowrap">Under Defined</span>
      <span className="h-[16px] w-[7px] border-x border-[#ccc]" />
      <span className="ml-[4px] w-[98px] whitespace-nowrap">Editing Assembly</span>
      <span className="h-[16px] w-[15px] border-x border-[#ccc]" />
      <button type="button" className="ml-[32px] flex w-[61px] items-center justify-between">MMGS <Caret className="rotate-180" /></button>
      <span className="ml-[66px] mr-[2px]"><Ico s={16}><path d="m2 6 7-4 9 5v6l-7 6-8-7z" fill="#ddd" stroke="#333" /><path d="m5 7 7 6 4-5" stroke="#333" strokeWidth="1.500" /></Ico></span>
    </footer>
  );
}

const Adobe = ({ t, c, bg }) => (
  <span className="flex h-[22px] w-[22px] items-center justify-center border-2 text-[12px] leading-none" style={{ color: c, borderColor: c, background: bg }}>{t}</span>
);
const SwBig = () => (
  <Ico s={24} box={24}>
    <path d="M1 4 10 1l13 3v13l-11 5L1 17z" fill="#c51d24" />
    <path d="m1 4 9-3 13 3-10 3z" fill="#e5474c" />
    <path d="M13 7 23 4v13l-10 4z" fill="#9e1117" />
    <g fill="#fff" fontFamily="Liberation Sans, sans-serif" fontWeight="700">
      <text x="2" y="16" fontSize="11">S</text><text x="12" y="15" fontSize="11">W</text>
      <text x="5" y="23" fontSize="8">2018</text>
    </g>
  </Ico>
);
const TASKS = [
  ["Start", <Ico s={16} box={16}><path d="M0 2.300 7 1.300v6.400H0zM8 1.200 16 0v7.700H8zM0 8.500h7v6.300l-7-1zM8 8.500h8V16l-8-1.200z" fill="#fff" /></Ico>],
  ["File Explorer", <Ico s={22}><path d="M1 2h7l2 2h9v14H1z" fill="#f8cf58" /><path d="M1 2h7l1 2H1z" fill="#d99a19" /><path d="M4 18v-7h12v7h-3v-3H7v3z" fill="#3c96dc" /></Ico>, "open"],
  ["Ryzen", <Ico s={24} box={24}><path d="M0 0h24v24H0z" fill="#000" /><circle cx="12" cy="12" r="6" stroke="#e8611a" strokeWidth="2" /><text x="12" y="14.500" fontSize="7" fontWeight="700" fill="#ddd" textAnchor="middle" fontFamily="Liberation Sans, sans-serif">RYZEN</text></Ico>],
  ["AutoCAD", <Ico s={24} box={24}><path d="M0 0h24v24H0z" fill="#f4e9e7" /><path d="m3 21 8-19h4l5 19h-4l-2-6-5 1-2 5zM10 13l4-1-2-6z" fill="#b5232c" fillRule="evenodd" /></Ico>],
  ["Illustrator", <Adobe t="Ai" c="#f07f13" bg="#261300" />],
  ["Photoshop", <Adobe t="Ps" c="#00c0f0" bg="#001c26" />],
  ["Lightroom", <Adobe t="Lr" c="#a8cbe0" bg="#0d2233" />],
  ["Snipping Tool", <Ico s={24} box={24}><ellipse cx="12" cy="8" rx="11" ry="6" transform="rotate(-20 12 8)" fill="#eee" stroke="#c33" strokeWidth="1.500" /><path d="M10 5l5 11M18 6l-5 9" stroke="#999" strokeWidth="1.500" /><circle cx="14" cy="19" r="2.500" stroke="#2b8fd0" strokeWidth="1.800" /><circle cx="20" cy="16" r="2.500" stroke="#2b8fd0" strokeWidth="1.800" /></Ico>],
  ["Cinema 4D", <Ico s={24} box={24}><circle cx="12" cy="12" r="11" fill="#d9dde2" /><circle cx="12.500" cy="12" r="8.500" fill="#132653" /><ellipse cx="15" cy="11" rx="4" ry="6" fill="#4668b0" transform="rotate(30 15 11)" /></Ico>],
  ["Firefox", <Ico s={24} box={24}><path d="M2 8q2 1 3-3 3 1 6-2 2 3 5 3V1q7 5 6 13-2 9-10 9T1 14q0-4 1-6z" fill="#f9711f" /><path d="M16 2q7 5 5 13-3 7-9 6 7-6 4-13z" fill="#ffcf38" /><circle cx="11.500" cy="13" r="5" fill="#7a3fd0" /><path d="M6 10q4-3 6 1-3 0-3 3z" fill="#ff9a2a" /></Ico>, "open"],
  ["After Effects", <Adobe t="Ae" c="#b78cf2" bg="#1f0040" />],
  ["Premiere", <Adobe t="Pr" c="#d47bf5" bg="#2a0034" />],
  ["SOLIDWORKS 2018", <SwBig />],
  ["Cura", <Ico s={24} box={24}><path d="M0 6 6 0h18v17l-6 7H0z" fill="#13a9e5" /><path d="M17 7h-5q-4 0-4 5t4 5h5" stroke="#fff" strokeWidth="3.500" /></Ico>],
  ["Shutter", <Ico s={24} box={24}><circle cx="12" cy="12" r="11.500" fill="#eee" /><circle cx="12" cy="12" r="8" stroke="#2080ea" strokeWidth="5" /><path d="m12 1 6 8M22 8l-5 8M20 19l-9-1M8 22l-3-9M2 14l6-7M6 3l8 3" stroke="#eee" strokeWidth="1.200" /></Ico>],
  ["VLC", <Ico s={24} box={24}><path d="M3 18h18l2 5H1z" fill="#f08a12" /><path d="M10.500 1h3L19 20q-7 3-14 0z" fill="#f28a18" /><path d="M9.500 6h5l1 4H8.500zM7.500 13h9l1 4q-5 2-11 0z" fill="#eee" /></Ico>],
  ["Task Monitor", <Ico s={24} box={24}><path d="M1 5h6v14l-6-2z" fill="#bbb" /><path d="m5 3 18-1-1 14-15 1z" fill="#ddd" stroke="#888" /><path d="m7 5 14-1-1 10-12 1z" fill="#f3fbff" /><path d="m8 12 3-5 2 5 3-4 4 4" stroke="#3a9ad0" strokeWidth="1.200" /><path d="M10 17h8l2 5-10 1z" fill="#ccc" /></Ico>, "full"],
  ["SOLIDWORKS window", <SwBig />, "active"],
];
function Taskbar() {
  const t = (d) => <Ico s={18}><path d={d} stroke="#eee" strokeWidth="1.400" /></Ico>;
  return (
    <nav aria-label="Taskbar" className="flex h-[40px] shrink-0 bg-[#1d1c1b] text-white">
      {TASKS.map(([n, g, s]) => (
        <button type="button" key={n} aria-label={n} className={"relative flex w-[49px] shrink-0 items-center justify-center " + (s === "active" ? "bg-[#4a4847]" : "")}>
          {g}
          {s && <span className={"absolute bottom-0 h-[2px] bg-[#f3a266] " + (s === "active" ? "inset-x-0" : "inset-x-[5px]")} />}
        </button>
      ))}
      <div className="ml-auto flex items-center pr-[15px]">
        <IconBtn label="People" className="w-[36px]">{t("M13 7a3 3 0 1 0-.1 0M9 12q1-4 4-4t5 4M6 13a2.500 2.500 0 1 0-.1 0M2 19q0-5 4-5t4 5")}</IconBtn>
        <IconBtn label="Hidden icons" className="w-[34px]">{t("m5 12 5-5 5 5")}</IconBtn>
        <IconBtn label="NVIDIA" className="w-[24px]"><Ico s={14}><path d="M0 2h20v16H0z" fill="#67a700" /><path d="M3 10q5-7 13 0-8 7-13 0" stroke="#12240a" strokeWidth="1.800" /><circle cx="9" cy="10" r="2.500" fill="#12240a" /></Ico></IconBtn>
        <IconBtn label="Network" className="w-[22px]">{t("M3 19A15 15 0 0 1 18 3M7 19A11 11 0 0 1 18 7M11 19a7 7 0 0 1 7-8M14 19a4 4 0 0 1 4-4")}</IconBtn>
        <IconBtn label="Volume" className="w-[24px]">{t("M2 8h3l4-4v12l-4-4H2zM12 7q2 3 0 6M15 5q3 5 0 10M17 3q4 7 0 14")}</IconBtn>
        <IconBtn label="OneDrive" className="w-[26px]"><Ico s={18}><path d="M5 16q-4 0-4-3t4-3q1-5 5-4 4 0 5 4 4 0 4 3t-3 3z" fill="#eee" /></Ico></IconBtn>
        <button type="button" className="w-[33px] text-center">ENG</button>
        <button type="button" className="w-[70px] text-center leading-[17px]"><time>21:11<br />26-05-2020</time></button>
        <IconBtn label="Notifications" className="ml-[5px] w-[34px]">
          <Ico s={26} box={26}><path d="M3 3h17v13h-9l-4 4v-4H3z" fill="#fff" /><path d="M6 7h11M6 10h11M6 13h7" stroke="#222" strokeWidth="1.200" /><circle cx="18" cy="18" r="7" fill="#333" stroke="#aaa" /><text x="18" y="22" fontSize="11" textAnchor="middle" fill="#fff" fontFamily="Open Sans, sans-serif">1</text></Ico>
        </IconBtn>
      </div>
    </nav>
  );
}

export default function App() {
  return (
    <div className="flex h-screen flex-col overflow-hidden bg-[#484848] font-['Roboto','Noto_Sans',sans-serif] text-[12px] text-[#f0f0f0]">
      <TitleBar />
      <Ribbon />
      <div className="flex min-h-0 flex-1">
        <div className="flex min-w-0 flex-1 flex-col">
          <div className="flex min-h-0 flex-1">
            <LeftPanel />
            <Viewport />
          </div>
          <ModelTabs />
        </div>
        <TaskPane />
      </div>
      <FilterBar />
      <StatusBar />
      <Taskbar />
    </div>
  );
}
